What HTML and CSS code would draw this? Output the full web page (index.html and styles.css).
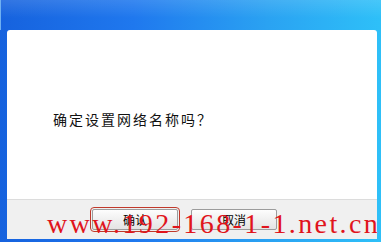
FILE: index.html
```html
<!DOCTYPE html>
<html lang="zh-CN">
<head>
    <meta charset="UTF-8">
    <meta name="viewport" content="width=device-width, initial-scale=1.0">
    <title>确认</title>
    <link rel="stylesheet" href="styles.css">
</head>
<body>
    <div class="window">
        <div class="titlebar"></div>
        <div class="frame">
            <div class="content">
                <p class="message">确定设置网络名称吗？</p>
            </div>
            <div class="footer">
                <button class="btn btn-default">确认</button>
                <button class="btn">取消</button>
            </div>
        </div>
        <div class="watermark">www.192-168-1-1.net.cn</div>
    </div>
</body>
</html>
```

FILE: styles.css
```css
html, body {
    margin: 0;
    padding: 0;
}
body {
    font-family: "Noto Sans CJK SC", "DejaVu Sans", sans-serif;
    background-color: #fff;
}
.window {
    position: relative;
    width: 381px;
    height: 242px;
    display: flex;
    flex-direction: column;
    background: linear-gradient(90deg, #1662de 0%, #1f78ee 35%, #2aa2f2 70%, #2ec0f8 100%);
    overflow: hidden;
}
.titlebar {
    height: 30px;
    flex: none;
    border-left: 1px solid #6fb0f2;
    background: linear-gradient(180deg, rgba(255,255,255,0.12) 0%, rgba(255,255,255,0) 60%);
}
.frame {
    flex: 1;
    display: flex;
    flex-direction: column;
    margin: 0 4px 3px 7px;
    border-radius: 3px 3px 0 0;
    overflow: hidden;
}
.content {
    flex: 1;
    background-color: #fff;
    padding: 80px 0 0 46px;
}
.message {
    margin: 0;
    font-size: 14px;
    line-height: 18px;
    letter-spacing: 2px;
    color: #111;
}
.footer {
    height: 40px;
    flex: none;
    background-color: #f0f0f0;
    border-top: 1px solid #dcdcdc;
    display: flex;
    align-items: flex-start;
    padding: 9px 0 0 85px;
    gap: 13px;
    box-sizing: border-box;
}
.btn {
    width: 86px;
    height: 21px;
    padding: 0;
    font-family: "Noto Sans CJK SC", sans-serif;
    font-size: 12px;
    line-height: 19px;
    color: #000;
    background: linear-gradient(180deg, #fdfdfd 0%, #f0f0f0 50%, #e4e4e4 100%);
    border: 1px solid #9c9c9c;
    border-radius: 2px;
}
.btn-default {
    outline: 1px solid #c0392b;
    outline-offset: 1px;
}
.watermark {
    position: absolute;
    left: 47px;
    top: 208px;
    font-family: "Liberation Serif", serif;
    font-size: 28px;
    line-height: 32px;
    letter-spacing: 2.4px;
    color: #e0141c;
    white-space: nowrap;
}
```
